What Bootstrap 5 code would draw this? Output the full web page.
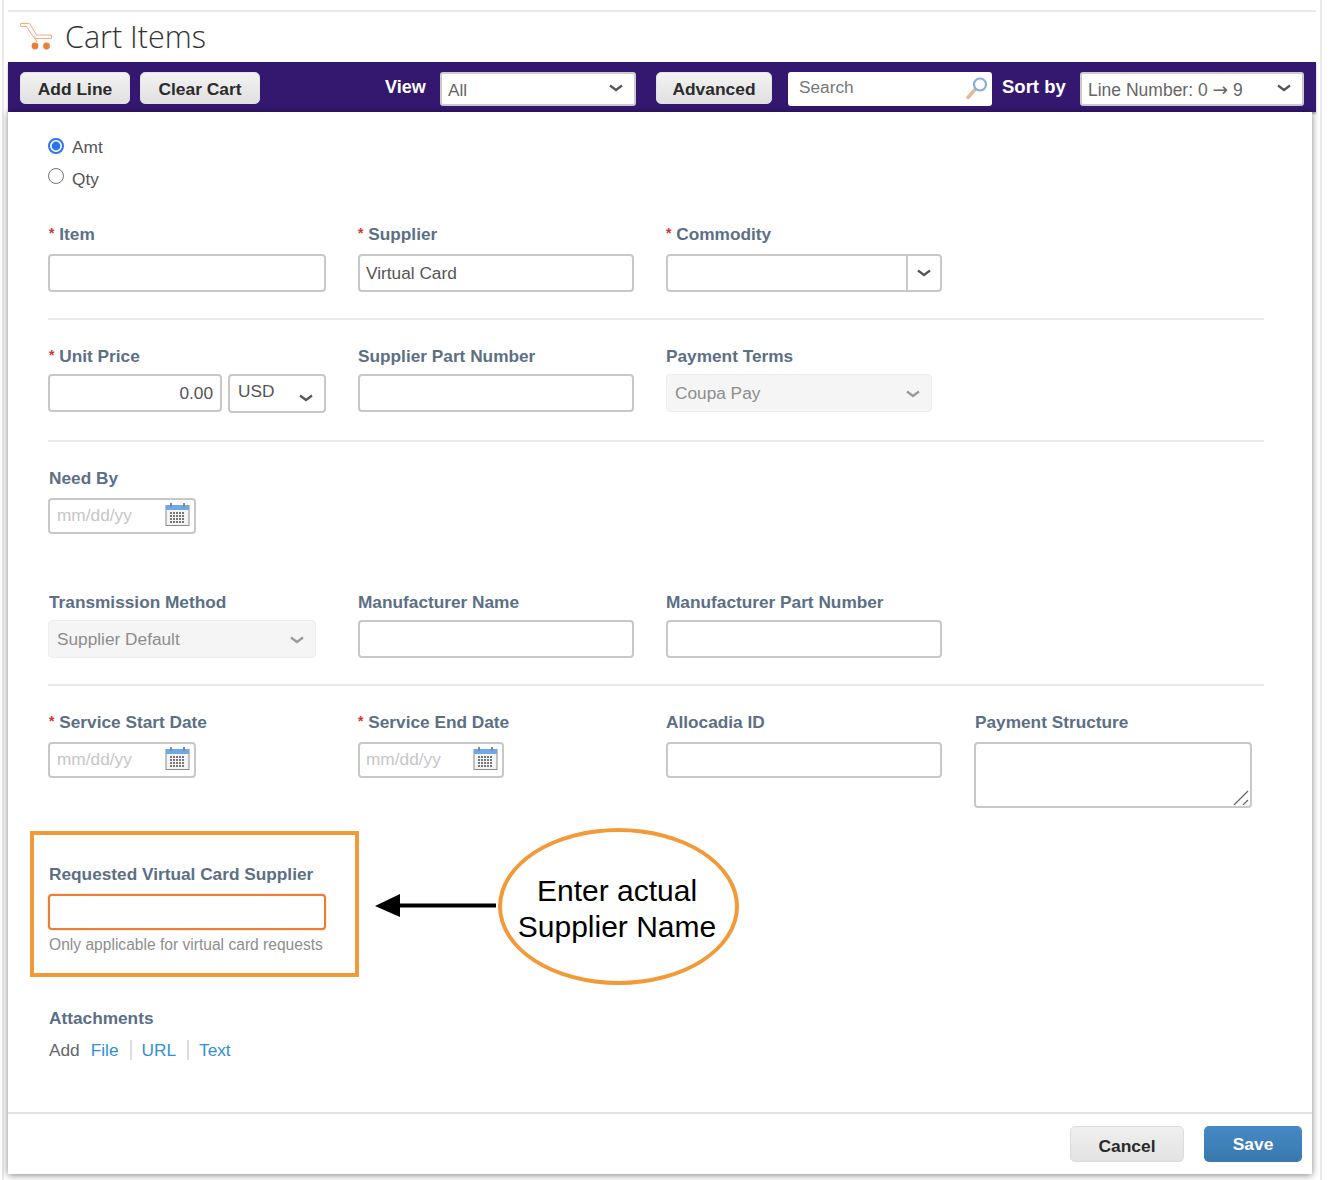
<!DOCTYPE html>
<html lang="en">
<head>
    <meta charset="UTF-8">
    <meta name="viewport" content="width=device-width, initial-scale=1.0">
    <title>Cart Items</title>
    <link href="https://cdn.jsdelivr.net/npm/bootstrap@5.3.0/dist/css/bootstrap.min.css" rel="stylesheet">
    <style>
        :root {
            --chev: url("data:image/svg+xml,%3csvg xmlns='http://www.w3.org/2000/svg' viewBox='0 0 14 8'%3e%3cpath fill='none' stroke='%23555' stroke-width='2.2' d='M1 1.5 7 6 13 1.5'/%3e%3c/svg%3e");
        }
        body {
            background: #fff;
            font-family: "Liberation Sans", Arial, sans-serif;
            color: #555;
            font-size: 17.25px;
        }
        .page-frame {
            width: 1320px;
            height: 1180px;
            margin-left: 2px;
            padding: 10px 4px 0 4px;
            border-left: 2px solid #eaeaea;
            border-right: 2px solid #eaeaea;
        }
        .head-line {
            border-top: 2px solid #e9e9e9;
            height: 52px;
            padding-bottom: 2px;
            width: 1308px;
        }
        .cart-title {
            font-family: "Open Sans", sans-serif;
            font-weight: 300;
            font-size: 30.5px;
            line-height: 48px;
            color: #333;
            margin: 0;
        }
        .cart-icon { margin-left: 11px; margin-right: 12px; }
        .tool-bar {
            background: #341870;
            width: 1308px;
            height: 50px;
            padding: 10px 12px 0;
            box-shadow: 0 2px 2px rgba(0,0,0,.35);
            position: relative;
        }
        .grey-btn {
            background: linear-gradient(#f3f3f3, #e0e0e0);
            border: 1px solid #e2e2e2;
            border-radius: 5px;
            color: #2b2b2b;
            font-weight: 700;
            font-size: 17.4px;
            height: 32px;
            line-height: 32px;
            padding: 0;
        }
        .btn-add { width: 110px; margin-right: 10px; }
        .btn-clear { width: 120px; margin-right: 125px; }
        .btn-adv { width: 116px; margin: 0 16px 0 20px; }
        .bar-lbl { color: #fff; font-weight: 700; font-size: 18px; line-height: 30px; white-space: nowrap; }
        .lbl-view { width: 55px; }
        .lbl-sort { width: 64px; margin: 0 14px 0 10px; font-size: 18.5px; }
        .sel-view { width: 196px; }
        .sel-sort { width: 224px; font-size: 17.5px; }
        .bar-sel {
            height: 34px;
            border: 2px solid #ccc;
            border-radius: 3px;
            padding: 3px 6px 0;
            line-height: 26px;
            color: #666;
            background-image: var(--chev);
            background-size: 14px 8px;
            background-position: right 11px top 10px;
        }
        .sel-view.bar-sel { font-size: 17.25px; padding-top: 2px; }
        .sel-sort.bar-sel { font-size: 17.5px; }
        .arrow-glyph { font-family: "DejaVu Sans", sans-serif; font-size: 18.5px; }
        .search-box {
            width: 204px;
            height: 34px;
            background: #fff;
            border-radius: 3px;
            padding: 0 3px 2px 11px;
            color: #777;
        }
        .form-panel {
            width: 1304px;
            height: 1062px;
            background: #fff;
            position: relative;
            box-shadow: 0 1px 7px rgba(0,0,0,.5);
        }
        .form-main { height: 1000px; padding: 20px 48px 0 40px; }
        .qty-radio { height: 32px; color: #555; }
        .qty-radio input {
            width: 16px;
            height: 16px;
            margin: 0 8px 0 0;
            border: 1px solid #777;
            position: relative;
            top: -4px;
        }
        .qty-radio input:checked {
            top: -2px;
            background-color: #fff;
            border: 2px solid #2b74ee;
            background-image: url("data:image/svg+xml,%3csvg xmlns='http://www.w3.org/2000/svg' viewBox='0 0 12 12'%3e%3ccircle cx='6' cy='6' r='4.4' fill='%232b74ee'/%3e%3c/svg%3e");
            background-size: 100%;
        }
        .field-row { width: 1234px; margin: 0; }
        .field-row > div { padding: 0; width: 308px; }
        .field-row > div:first-child { width: 310px; }
        .field-row > div:nth-child(2) .text-in, .field-row > div:nth-child(3) .text-in { width: 276px; }
        .field-row > div:nth-child(2) .fld-lbl, .field-row > div:nth-child(3) .fld-lbl { margin-left: 0; }
        .fld-lbl {
            display: block;
            margin: 0 0 10px 1px;
            height: 20px;
            line-height: 20px;
            font-weight: 700;
            font-size: 17.25px;
            color: #5c6f85;
        }
        .lbl-tight .fld-lbl { margin-bottom: 8px; }
        .lbl-gap { margin-bottom: 12px; }
        .req { color: #d9302c; font-size: 14px; position: relative; top: -2px; }
        .text-in, .text-in:focus {
            width: 278px;
            height: 38px;
            border: 2px solid #c8c8c8;
            border-radius: 4px;
            padding: 0 6px;
            font-size: 17.25px;
            color: #555;
            box-shadow: none;
        }
        .in-short { height: 36px; }
        .in-tall, .in-tall:focus { height: 66px; resize: none; }
        .area-wrap { width: 278px; position: relative; }
        .grip { position: absolute; right: 3px; bottom: 3px; }
        .price-in, .price-in:focus { width: 174px; margin-right: 6px; text-align: right; padding-right: 7px; }
        .cur-sel {
            width: 98px;
            height: 39px;
            border: 2px solid #c8c8c8;
            border-radius: 4px;
            padding: 0 8px 4px;
            font-size: 17.25px;
            color: #555;
            background-image: var(--chev);
            background-size: 14px 8px;
            background-position: right 11px top 18px;
        }
        .comm-box {
            width: 276px;
            height: 38px;
            border: 2px solid #c8c8c8;
            border-radius: 4px;
        }
        .comm-arrow { width: 34px; border-left: 2px solid #c8c8c8; }
        .off-sel, .off-sel:disabled {
            height: 38px;
            border: 1px solid #eee;
            border-radius: 4px;
            background-color: #f5f5f5;
            padding: 2px 8px 0;
            font-size: 17.25px;
            color: #8d8d8d;
            opacity: 1;
            background-image: url("data:image/svg+xml,%3csvg xmlns='http://www.w3.org/2000/svg' viewBox='0 0 14 8'%3e%3cpath fill='none' stroke='%23999' stroke-width='2.2' d='M1 1.5 7 6 13 1.5'/%3e%3c/svg%3e");
            background-size: 14px 8px;
            background-position: right 11px top 15px;
        }
        .off-terms { width: 266px; }
        .off-method { width: 268px; }
        .date-box {
            width: 148px;
            height: 36px;
            border: 2px solid #c8c8c8;
            border-radius: 4px;
            padding: 0 4px 0 7px;
            color: #c6c6c6;
            font-size: 17.25px;
        }
        .date-box svg { margin-bottom: 3px; }
        .date-narrow { width: 146px; padding-left: 6px; }
        .rule { margin: 0; width: 1216px; height: 2px; background: #e9e9e9; border: 0; opacity: 1; }
        .gap-a { margin-top: 28px; }
        .gap-b { margin-top: 26px; }
        .gap-c { margin-top: 27px; }
        .gap-d { margin-top: 58px; }
        .gap-e { margin-top: 56px; }
        .gap-f { margin-top: 54px; }
        .help-txt { font-size: 15.6px; line-height: 18px; margin: 6px 0 0 1px; color: #8e8e8e; }
        .attach-line { margin-left: 1px; line-height: 20px; color: #666; }
        .attach-line a { color: #2f8fd8; text-decoration: none; }
        .attach-line a + a { border-left: 2px solid #ddd; margin-left: 11px; padding-left: 10px; }
        .attach-line span { margin-right: 11px; }
        .warn-in, .warn-in:focus {
            border-color: #ec7d32;
            box-shadow: 0 0 2px rgba(236,125,50,.5);
        }
        .form-foot {
            height: 62px;
            border-top: 2px solid #e2e2e2;
            padding: 12px 10px 0 0;
        }
        .btn-cancel { width: 114px; height: 36px; line-height: 36px; padding-top: 1px; background: linear-gradient(#efefef, #e3e3e3); border-color: #ddd; }
        .btn-save {
            width: 98px;
            height: 36px;
            margin-left: 20px;
            background: linear-gradient(#448ac6, #3a78ae);
            border: 0;
            color: #fff;
            font-weight: 700;
            font-size: 17.4px;
            border-radius: 5px;
            padding: 1px 0 0;
        }
        /* annotation drawn over the form */
        .note-box {
            position: absolute;
            left: 22px;
            top: 719px;
            width: 329px;
            height: 146px;
            border: 4px solid #f29a38;
        }
        .note-oval {
            position: absolute;
            left: 490px;
            top: 716px;
            width: 241px;
            height: 157px;
            border: 4px solid #f29a38;
            border-radius: 50%;
            color: #000;
            font-size: 30px;
            line-height: 36px;
            text-align: center;
            padding: 4px 3px 0 0;
        }
        .note-arrow { position: absolute; left: 366px; top: 780px; }
    </style>
</head>
<body>
    <div class="page-frame">
        <div class="head-line d-flex align-items-center">
            <svg class="cart-icon" width="34" height="28" viewBox="0 0 34 28">
                <path d="M1.500 1.500h9l7 11.500h15v3.500H15.500L7.500 4.500h-6z" fill="none" stroke="#f2ac80" stroke-width="1"/>
                <path d="M15 14l3 6" fill="none" stroke="#f2ac80" stroke-width="1"/>
                <circle cx="16" cy="24" r="3.400" fill="#e8803c"/>
                <circle cx="27.500" cy="24" r="3.400" fill="#e8803c"/>
            </svg>
            <h1 class="cart-title">Cart Items</h1>
        </div>

        <div class="tool-bar d-flex align-items-start">
            <button class="btn grey-btn btn-add" type="button">Add Line</button>
            <button class="btn grey-btn btn-clear" type="button">Clear Cart</button>
            <span class="bar-lbl lbl-view">View</span>
            <select class="form-select bar-sel sel-view"><option>All</option></select>
            <button class="btn grey-btn btn-adv" type="button">Advanced</button>
            <div class="search-box d-flex align-items-center justify-content-between">
                <span>Search</span>
                <svg width="24" height="24" viewBox="0 0 24 24">
                    <path d="M3 21.500l7-8" stroke="#e2bd9c" stroke-width="3.500" stroke-linecap="round"/>
                    <circle cx="15" cy="8.500" r="6" fill="#fff" stroke="#86ace0" stroke-width="2.200"/>
                </svg>
            </div>
            <span class="bar-lbl lbl-sort">Sort by</span>
            <div class="form-select bar-sel sel-sort">Line Number: 0 <span class="arrow-glyph">→</span> 9</div>
        </div>

        <div class="form-panel">
            <div class="form-main">
                <div class="qty-radio d-flex align-items-center">
                    <input class="form-check-input" type="radio" name="qtyamt" id="rAmt" checked>
                    <label for="rAmt">Amt</label>
                </div>
                <div class="qty-radio d-flex align-items-center">
                    <input class="form-check-input" type="radio" name="qtyamt" id="rQty">
                    <label for="rQty">Qty</label>
                </div>

                <div class="row field-row gap-a">
                    <div>
                        <label class="fld-lbl"><span class="req">*</span> Item</label>
                        <input class="form-control text-in" type="text">
                    </div>
                    <div>
                        <label class="fld-lbl"><span class="req">*</span> Supplier</label>
                        <input class="form-control text-in" type="text" value="Virtual Card">
                    </div>
                    <div>
                        <label class="fld-lbl"><span class="req">*</span> Commodity</label>
                        <div class="comm-box d-flex">
                            <div class="flex-grow-1"></div>
                            <div class="comm-arrow d-flex align-items-center justify-content-center">
                                <svg width="14" height="8" viewBox="0 0 14 8"><path fill="none" stroke="#555" stroke-width="2.200" d="M1 1.500 7 6 13 1.500"/></svg>
                            </div>
                        </div>
                    </div>
                </div>
                <hr class="rule gap-b">

                <div class="row field-row lbl-tight gap-b">
                    <div>
                        <label class="fld-lbl"><span class="req">*</span> Unit Price</label>
                        <div class="d-flex">
                            <input class="form-control text-in price-in" type="text" value="0.00">
                            <select class="form-select cur-sel"><option>USD</option></select>
                        </div>
                    </div>
                    <div>
                        <label class="fld-lbl">Supplier Part Number</label>
                        <input class="form-control text-in" type="text">
                    </div>
                    <div>
                        <label class="fld-lbl">Payment Terms</label>
                        <select class="form-select off-sel off-terms" disabled><option>Coupa Pay</option></select>
                    </div>
                </div>
                <hr class="rule gap-c">

                <div class="row field-row gap-b">
                    <div>
                        <label class="fld-lbl">Need By</label>
                        <div class="date-box d-flex align-items-center justify-content-between">
                            <span>mm/dd/yy</span>
                            <svg width="25" height="25" viewBox="0 0 25 25"><use href="#cal"/></svg>
                        </div>
                    </div>
                </div>

                <div class="row field-row lbl-tight gap-d">
                    <div>
                        <label class="fld-lbl">Transmission Method</label>
                        <select class="form-select off-sel off-method" disabled><option>Supplier Default</option></select>
                    </div>
                    <div>
                        <label class="fld-lbl">Manufacturer Name</label>
                        <input class="form-control text-in" type="text">
                    </div>
                    <div>
                        <label class="fld-lbl">Manufacturer Part Number</label>
                        <input class="form-control text-in" type="text">
                    </div>
                </div>
                <hr class="rule gap-b">

                <div class="row field-row gap-b">
                    <div>
                        <label class="fld-lbl"><span class="req">*</span> Service Start Date</label>
                        <div class="date-box d-flex align-items-center justify-content-between">
                            <span>mm/dd/yy</span>
                            <svg width="25" height="25" viewBox="0 0 25 25"><use href="#cal"/></svg>
                        </div>
                    </div>
                    <div>
                        <label class="fld-lbl"><span class="req">*</span> Service End Date</label>
                        <div class="date-box date-narrow d-flex align-items-center justify-content-between">
                            <span>mm/dd/yy</span>
                            <svg width="25" height="25" viewBox="0 0 25 25"><use href="#cal"/></svg>
                        </div>
                    </div>
                    <div>
                        <label class="fld-lbl">Allocadia ID</label>
                        <input class="form-control text-in in-short" type="text">
                    </div>
                    <div>
                        <label class="fld-lbl">Payment Structure</label>
                        <div class="area-wrap">
                            <textarea class="form-control text-in in-tall"></textarea>
                            <svg class="grip" width="16" height="15" viewBox="0 0 16 15">
                                <path d="M1 15 15 1M10 15l5-5" stroke="#666" stroke-width="1.300"/>
                            </svg>
                        </div>
                    </div>
                </div>

                <div class="row field-row gap-e">
                    <div>
                        <label class="fld-lbl">Requested Virtual Card Supplier</label>
                        <input class="form-control text-in in-short warn-in" type="text">
                        <p class="help-txt">Only applicable for virtual card requests</p>
                    </div>
                </div>

                <div class="gap-f">
                    <label class="fld-lbl lbl-gap">Attachments</label>
                    <div class="attach-line">
                        <span>Add</span><a href="#">File</a><a href="#">URL</a><a href="#">Text</a>
                    </div>
                </div>
            </div>

            <div class="form-foot d-flex justify-content-end align-items-start">
                <button class="btn grey-btn btn-cancel" type="button">Cancel</button>
                <button class="btn btn-save" type="button">Save</button>
            </div>

            <div class="note-box"></div>
            <svg class="note-arrow" width="126" height="28" viewBox="0 0 126 28">
                <path d="M26 13.500H122" stroke="#000" stroke-width="4"/>
                <path d="M1 14 26 2V25z" fill="#000"/>
            </svg>
            <div class="note-oval d-flex align-items-center justify-content-center">
                <div>Enter actual<br>Supplier Name</div>
            </div>
        </div>
    </div>

    <svg width="0" height="0" class="position-absolute">
        <symbol id="cal" viewBox="0 0 25 25">
            <rect x="1" y="3.500" width="23" height="20" fill="#f4f4f4" stroke="#8a8a8a"/>
            <rect x="1" y="3" width="23" height="5" fill="#6fa8e8"/>
            <path d="M6 1v4M19 1v4" stroke="#888" stroke-width="2"/>
            <path d="M5 11h15M5 14h15M5 17h15M5 20h15" stroke="#777" stroke-width="2" stroke-dasharray="2 1"/>
        </symbol>
    </svg>
</body>
</html>
